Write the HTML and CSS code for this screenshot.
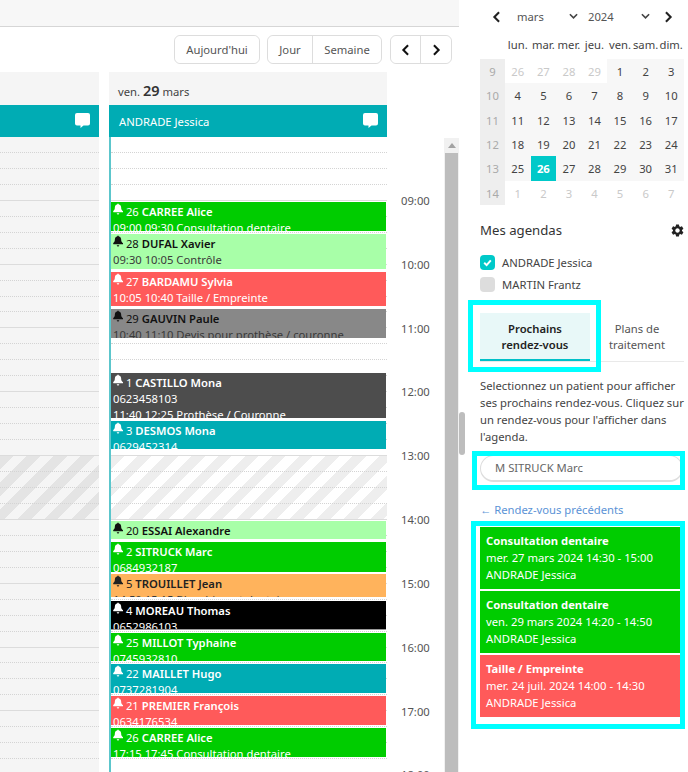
FILE: index.html
```html
<!DOCTYPE html>
<html lang="fr">
<head>
<meta charset="utf-8">
<title>Agenda</title>
<link rel="stylesheet" href="styles.css">
</head>
<body>
<svg class="defs" aria-hidden="true">
  <symbol id="bell" viewBox="0 0 24 26"><path d="M12 26a3 3 0 0 0 3-3H9a3 3 0 0 0 3 3zM23 17.500c-1.500-1.500-3.500-2.800-3.500-8.500 0-3.800-2.700-6.800-6-7.500V1.500a1.500 1.500 0 0 0-3 0v0c-3.300.7-6 3.700-6 7.500 0 5.700-2 7-3.500 8.500-.5.500-.7 1-.7 1.300 0 .7.600 2.200 1.300 2.200h21.800c.7 0 1.300-1.500 1.300-2.200 0-.3-.2-.8-.7-1.300z"/></symbol>
  <symbol id="comment" viewBox="0 0 15 15"><path d="M2 0h11a2 2 0 0 1 2 2v8.500a2 2 0 0 1-2 2H8.500L5.500 15V12.500H2a2 2 0 0 1-2-2V2a2 2 0 0 1 2-2z"/></symbol>
  <symbol id="chev-l" viewBox="0 0 10 14"><path d="M8 1.500 2.500 7 8 12.500" fill="none" stroke="currentColor" stroke-width="2.400"/></symbol>
  <symbol id="chev-r" viewBox="0 0 10 14"><path d="M2 1.500 7.500 7 2 12.500" fill="none" stroke="currentColor" stroke-width="2.400"/></symbol>
  <symbol id="chev-d" viewBox="0 0 10 7"><path d="M1 1l4 4 4-4" fill="none" stroke="currentColor" stroke-width="1.800"/></symbol>
  <symbol id="gear" viewBox="0 0 24 24"><path d="M19.140 12.940c.04-.3.06-.61.06-.94 0-.32-.02-.64-.07-.94l2.030-1.580a.49.49 0 0 0 .12-.61l-1.920-3.320a.488.488 0 0 0-.59-.22l-2.390.96c-.5-.38-1.030-.7-1.620-.94l-.36-2.540a.484.484 0 0 0-.48-.41h-3.840c-.24 0-.43.17-.47.41l-.36 2.540c-.59.24-1.130.57-1.620.94l-2.390-.96c-.22-.08-.47 0-.59.22L2.740 8.870c-.12.21-.08.47.12.61l2.030 1.580c-.05.3-.09.63-.09.94s.02.64.07.94l-2.030 1.580a.49.49 0 0 0-.12.61l1.920 3.320c.12.22.37.29.59.22l2.390-.96c.5.38 1.030.7 1.620.94l.36 2.540c.05.24.24.41.48.41h3.840c.24 0 .44-.17.47-.41l.36-2.540c.59-.24 1.130-.56 1.620-.94l2.390.96c.22.08.47 0 .59-.22l1.920-3.320c.12-.22.07-.47-.12-.61l-2.010-1.580zM12 15.600c-1.980 0-3.600-1.620-3.600-3.600s1.620-3.600 3.600-3.600 3.600 1.620 3.600 3.600-1.620 3.600-3.600 3.600z"/></symbol>
</svg>

<div class="app">
  <main class="main">
    <div class="topbar"></div>
    <div class="toolbar">
      <div class="btn-group"><button class="btn btn-today">Aujourd'hui</button></div>
      <div class="btn-group"><button class="btn btn-jour">Jour</button><button class="btn btn-sem">Semaine</button></div>
      <div class="btn-group btn-group-nav"><button class="btn btn-arrow"><svg class="arrow"><use href="#chev-l"/></svg></button><button class="btn btn-arrow"><svg class="arrow"><use href="#chev-r"/></svg></button></div>
    </div>

    <div class="calendar">
      <section class="col col-prev">
        <div class="day-head"></div>
        <div class="agenda-head"><svg class="comment"><use href="#comment"/></svg></div>
        <div class="grid">
          <div class="hatch hatch-prev"></div>
          <div class="hour"><i></i><i></i><i></i><i></i></div>
          <div class="hour"><i></i><i></i><i></i><i></i></div>
          <div class="hour"><i></i><i></i><i></i><i></i></div>
          <div class="hour"><i></i><i></i><i></i><i></i></div>
          <div class="hour"><i></i><i></i><i></i><i></i></div>
          <div class="hour"><i></i><i></i><i></i><i></i></div>
          <div class="hour"><i></i><i></i><i></i><i></i></div>
          <div class="hour"><i></i><i></i><i></i><i></i></div>
          <div class="hour"><i></i><i></i><i></i><i></i></div>
          <div class="hour"><i></i><i></i><i></i><i></i></div>
        </div>
      </section>

      <section class="col col-day">
        <div class="day-head">ven. <strong>29</strong> mars</div>
        <div class="agenda-head"><span>ANDRADE Jessica</span><svg class="comment"><use href="#comment"/></svg></div>
        <div class="grid grid-day">
          <div class="hatch"></div>
          <div class="hour"><i></i><i></i><i></i><i></i></div>
          <div class="hour"><i></i><i></i><i></i><i></i></div>
          <div class="hour"><i></i><i></i><i></i><i></i></div>
          <div class="hour"><i></i><i></i><i></i><i></i></div>
          <div class="hour"><i></i><i></i><i></i><i></i></div>
          <div class="hour"><i></i><i></i><i></i><i></i></div>
          <div class="hour"><i></i><i></i><i></i><i></i></div>
          <div class="hour"><i></i><i></i><i></i><i></i></div>
          <div class="hour"><i></i><i></i><i></i><i></i></div>
          <div class="hour"><i></i><i></i><i></i><i></i></div>

          <article class="event green" style="top:65px;height:29px"><svg class="bell"><use href="#bell"/></svg> 26 <b>CARREE Alice</b><br>09:00 09:30 Consultation dentaire</article>
          <article class="event lime" style="top:97px;height:35px"><svg class="bell"><use href="#bell"/></svg> 28 <b>DUFAL Xavier</b><br><span class="sub">09:30 10:05 Contrôle</span></article>
          <article class="event red" style="top:135px;height:34px"><svg class="bell"><use href="#bell"/></svg> 27 <b>BARDAMU Sylvia</b><br>10:05 10:40 Taille / Empreinte</article>
          <article class="event grey" style="top:172px;height:29px"><svg class="bell"><use href="#bell"/></svg> 29 <b>GAUVIN Paule</b><br><span class="sub">10:40 11:10 Devis pour prothèse / couronne</span></article>
          <article class="event dark" style="top:236px;height:45px"><svg class="bell"><use href="#bell"/></svg> 1 <b>CASTILLO Mona</b><br>0623458103<br>11:40 12:25 Prothèse / Couronne</article>
          <article class="event teal" style="top:284px;height:28px"><svg class="bell"><use href="#bell"/></svg> 3 <b>DESMOS Mona</b><br>0629452314</article>
          <article class="event lime" style="top:384px;height:18px"><svg class="bell"><use href="#bell"/></svg> 20 <b>ESSAI Alexandre</b></article>
          <article class="event green" style="top:405px;height:30px"><svg class="bell"><use href="#bell"/></svg> 2 <b>SITRUCK Marc</b><br>0684932187</article>
          <article class="event orange" style="top:437px;height:23px"><svg class="bell"><use href="#bell"/></svg> 5 <b>TROUILLET Jean</b><br><span class="sub">14:50 15:15 Blanchiment dentaire</span></article>
          <article class="event black" style="top:464px;height:29px"><svg class="bell"><use href="#bell"/></svg> 4 <b>MOREAU Thomas</b><br>0652986103</article>
          <article class="event green" style="top:496px;height:28px"><svg class="bell"><use href="#bell"/></svg> 25 <b>MILLOT Typhaine</b><br>0745932810</article>
          <article class="event teal" style="top:527px;height:29px"><svg class="bell"><use href="#bell"/></svg> 22 <b>MAILLET Hugo</b><br>0737281904</article>
          <article class="event red" style="top:559px;height:29px"><svg class="bell"><use href="#bell"/></svg> 21 <b>PREMIER François</b><br>0634176534</article>
          <article class="event green" style="top:591px;height:29px"><svg class="bell"><use href="#bell"/></svg> 26 <b>CARREE Alice</b><br>17:15 17:45 Consultation dentaire</article>
        </div>
      </section>

      <div class="times">
        <div class="time">09:00</div>
        <div class="time">10:00</div>
        <div class="time">11:00</div>
        <div class="time">12:00</div>
        <div class="time">13:00</div>
        <div class="time">14:00</div>
        <div class="time">15:00</div>
        <div class="time">16:00</div>
        <div class="time">17:00</div>
        <div class="time">18:00</div>
      </div>

      <div class="scrollbar">
        <div class="scroll-up"></div>
        <div class="scroll-thumb"></div>
      </div>
    </div>
  </main>

  <aside class="sidebar">
    <div class="side-thumb"></div>

    <div class="mini-nav">
      <svg class="nav-chev nav-prev"><use href="#chev-l"/></svg>
      <div class="mini-select sel-month"><span>mars</span><svg class="sel-chev"><use href="#chev-d"/></svg></div>
      <div class="mini-select sel-year"><span>2024</span><svg class="sel-chev"><use href="#chev-d"/></svg></div>
      <svg class="nav-chev nav-next"><use href="#chev-r"/></svg>
    </div>

    <div class="mini-cal">
      <div class="dow"></div><div class="dow">lun.</div><div class="dow">mar.</div><div class="dow">mer.</div><div class="dow">jeu.</div><div class="dow">ven.</div><div class="dow">sam.</div><div class="dow">dim.</div>
      <div class="wk">9</div><div class="d off">26</div><div class="d off">27</div><div class="d off">28</div><div class="d off">29</div><div class="d">1</div><div class="d">2</div><div class="d">3</div>
      <div class="wk">10</div><div class="d">4</div><div class="d">5</div><div class="d">6</div><div class="d">7</div><div class="d">8</div><div class="d">9</div><div class="d">10</div>
      <div class="wk">11</div><div class="d">11</div><div class="d">12</div><div class="d">13</div><div class="d">14</div><div class="d">15</div><div class="d">16</div><div class="d">17</div>
      <div class="wk">12</div><div class="d">18</div><div class="d">19</div><div class="d">20</div><div class="d">21</div><div class="d">22</div><div class="d">23</div><div class="d">24</div>
      <div class="wk">13</div><div class="d">25</div><div class="d today">26</div><div class="d">27</div><div class="d">28</div><div class="d">29</div><div class="d">30</div><div class="d">31</div>
      <div class="wk">14</div><div class="d off">1</div><div class="d off">2</div><div class="d off">3</div><div class="d off">4</div><div class="d off">5</div><div class="d off">6</div><div class="d off">7</div>
    </div>

    <div class="agendas-head"><span>Mes agendas</span><svg class="gear"><use href="#gear"/></svg></div>
    <div class="agenda-row"><span class="check on"><svg viewBox="0 0 10 10"><path d="M2 5.200 4.200 7.400 8 3" fill="none" stroke="#fff" stroke-width="1.800"/></svg></span>ANDRADE Jessica</div>
    <div class="agenda-row"><span class="check"></span>MARTIN Frantz</div>

    <div class="tabs">
      <div class="tab active hl hl-tab">Prochains<br>rendez-vous</div>
      <div class="tab">Plans de<br>traitement</div>
    </div>

    <p class="help">Selectionnez un patient pour afficher ses prochains rendez-vous. Cliquez sur un rendez-vous pour l'afficher dans l'agenda.</p>

    <div class="search hl hl-search">M SITRUCK Marc</div>

    <a class="prev-link">← Rendez-vous précédents</a>

    <div class="cards hl hl-cards">
      <div class="card green"><b>Consultation dentaire</b><br>mer. 27 mars 2024 14:30 - 15:00<br>ANDRADE Jessica</div>
      <div class="card green"><b>Consultation dentaire</b><br>ven. 29 mars 2024 14:20 - 14:50<br>ANDRADE Jessica</div>
      <div class="card red"><b>Taille / Empreinte</b><br>mer. 24 juil. 2024 14:00 - 14:30<br>ANDRADE Jessica</div>
    </div>
  </aside>
</div>
</body>
</html>
```

FILE: styles.css
```css
* { box-sizing: border-box; }
html, body { margin: 0; height: 772px; overflow: hidden; background: #fff; }
body { font: 11.25px/17px "Noto Sans", "Open Sans", sans-serif; color: #444; }
.defs { display: none; }
.app { display: flex; height: 772px; overflow: hidden; }

/* main */
.main { width: 459px; flex: none; display: flex; flex-direction: column; overflow: hidden; }
.topbar { height: 27px; flex: none; background: #f7f7f7; border-bottom: 1px solid #d6d6d6; }
.toolbar { height: 45px; flex: none; display: flex; justify-content: flex-end; align-items: flex-start; gap: 7px; padding: 8px 7px 0 0; }
.btn-group { display: flex; height: 29px; border: 1px solid #ddd; border-radius: 6px; }
.btn-group-nav { margin-left: 1px; }
.btn { font: inherit; color: #555; background: #fff; border: 0; border-radius: 6px; padding: 0; height: 27px; }
.btn-today { width: 84px; }
.btn-jour { width: 45px; border-right: 1px solid #ddd; border-radius: 6px 0 0 6px; }
.btn-sem { width: 68px; }
.btn-arrow { width: 30px; color: #111; display: flex; align-items: center; justify-content: center; }
.btn-arrow:first-child { border-right: 1px solid #ddd; border-radius: 6px 0 0 6px; }
.arrow { width: 9px; height: 12px; }

.calendar { flex: 1; display: flex; min-height: 0; }
.col { display: flex; flex-direction: column; flex: none; }
.col-prev { width: 99px; margin-right: 10px; }
.col-day { width: 278px; }
.day-head { height: 33px; flex: none; background: #f5f5f5; padding: 9px 0 0 9px; line-height: 19px; color: #444; }
.day-head strong { font-size: 14.5px; font-weight: 600; color: #333; }
.agenda-head { height: 32px; flex: none; background: #00acb4; color: #fff; display: flex; align-items: center; justify-content: space-between; padding: 0 9px 0 10px; }
.col-prev .agenda-head { justify-content: flex-end; }
.comment { width: 15px; height: 15px; fill: #fff; margin-top: -1px; }

.grid { position: relative; flex: 1; background: #f5f5f5; overflow: hidden; }
.grid-day { background: #fff; border-left: 2px solid #5cc6cc; }
.hour { position: relative; }
.hour i { display: block; height: 15.96px; border-bottom: 1px dotted #d4d4d4; }
.hour i:last-child { border-bottom: 1px solid #dcdcdc; }
.hatch { position: absolute; left: 0; right: 0; top: 319px; height: 64px; background: repeating-linear-gradient(135deg, #eee 0 9.5px, #fff 9.5px 19px); }
.hatch-prev { background: repeating-linear-gradient(135deg, #e4e4e4 0 9.5px, #f5f5f5 9.5px 19px); }

.event { position: absolute; left: 0; width: 275px; padding: 1px 0 0 2px; line-height: 16px; overflow: hidden; white-space: nowrap; color: #fff; }
.event b { font-weight: 600; }
.bell { width: 10px; height: 12px; fill: currentColor; vertical-align: 1px; }
.event .sub { color: #3a3a3a; }
.green { background: #00cc00; color: #fff; }
.lime { background: #a8ffa8; color: #111; }
.red { background: #ff5a5a; color: #fff; }
.grey { background: #888; color: #111; }
.dark { background: #4d4d4d; color: #fff; }
.teal { background: #00acb4; color: #fff; }
.orange { background: #ffb35c; color: #222; }
.black { background: #000; color: #fff; border-bottom: 1px solid #999; }

.times { width: 57px; flex: none; margin-top: 65px; padding: 32px 0 0 14px; overflow: hidden; color: #555; }
.time { height: 63.83px; line-height: 63.83px; }
.scrollbar { width: 15px; flex: none; margin-top: 66px; background: #f1f1f1; padding: 0 1px; display: flex; flex-direction: column; }
.scroll-up { height: 15px; flex: none; position: relative; }
.scroll-up::before { content: ""; position: absolute; left: 3px; top: 5px; border: 4px solid transparent; border-top: 0; border-bottom: 5px solid #a3a3a3; }
.scroll-thumb { flex: 1; background: #bdbdbd; }

/* sidebar */
.sidebar { width: 229px; flex: none; position: relative; padding: 8px 4px 0 21px; }
.side-thumb { position: absolute; left: 0; top: 412px; width: 6px; height: 43px; border-radius: 3px; background: #bdbdbd; }
.mini-nav { display: flex; align-items: center; height: 17px; color: #555; }
.nav-chev { width: 9px; height: 12px; color: #222; flex: none; }
.nav-prev { margin-left: 12px; }
.nav-next { margin-left: 14px; }
.mini-select { display: flex; justify-content: space-between; align-items: center; flex: none; }
.sel-month { width: 61px; margin-left: 16px; }
.sel-year { width: 62px; margin-left: 10px; }
.sel-chev { width: 9px; height: 7px; color: #444; }

.mini-cal { display: grid; grid-template-columns: 25px repeat(7, 25.57px); grid-template-rows: 34px repeat(6, 24.33px); text-align: center; }
.dow { padding-top: 11px; white-space: nowrap; color: #444; line-height: 17px; }
.wk, .d { line-height: 25px; }
.wk { background: #eee; color: #aaa; }
.d { background: #f7f7f7; color: #444; }
.d.off { background: #fff; color: #c9c9c9; }
.d.today { background: #00c9c9; color: #fff; font-weight: 700; }

.agendas-head { display: flex; justify-content: space-between; align-items: center; height: 22px; margin-top: 15px; font-size: 13.2px; color: #333; }
.gear { width: 15px; height: 15px; fill: #222; margin-right: -1px; }
.agenda-row { display: flex; align-items: center; gap: 7px; height: 15px; margin-top: 7px; color: #444; }
.agendas-head + .agenda-row { margin-top: 13px; }
.check { width: 15px; height: 15px; border-radius: 4px; background: #ddd; display: block; flex: none; }
.check.on { background: #00c9c9; padding: 2px; }
.check svg { display: block; }

.tabs { display: flex; margin-top: 21px; border-bottom: 1px solid #e9e9e9; line-height: 16px; text-align: center; }
.tab { height: 48px; padding-top: 8px; color: #555; }
.tab:nth-child(2) { flex: 1; }
.tab.active { width: 110px; background: #e8f8f8; border-bottom: 2px solid #00c0c8; font-weight: 600; color: #222; }

.help { margin: 15px 0 0; line-height: 17px; color: #444; }
.search { height: 27px; margin-top: 10px; margin-right: 1px; border: 1px solid #ddd; border-bottom-width: 2px; border-radius: 14px; padding: 0 14px; line-height: 24px; color: #666; }
.prev-link { display: block; margin-top: 19px; color: #5b93d6; white-space: nowrap; }
.cards { margin-top: 9px; margin-right: 4px; display: flex; flex-direction: column; gap: 2px; }
.card { height: 62px; padding: 5px 6px 0; color: #fff; line-height: 17px; }
.card b { font-weight: 700; }

/* annotation frames drawn over the sidebar */
.hl { position: relative; }
.hl::after { content: ""; position: absolute; border: 5px solid #00ffff; pointer-events: none; }
.hl-tab::after { left: -12px; right: -11px; top: -13px; bottom: -13px; }
.hl-search::after { left: -9px; right: -3px; top: -5px; bottom: -10px; }
.hl-cards::after { left: -9px; right: -5px; top: -6px; bottom: -12px; }
```
